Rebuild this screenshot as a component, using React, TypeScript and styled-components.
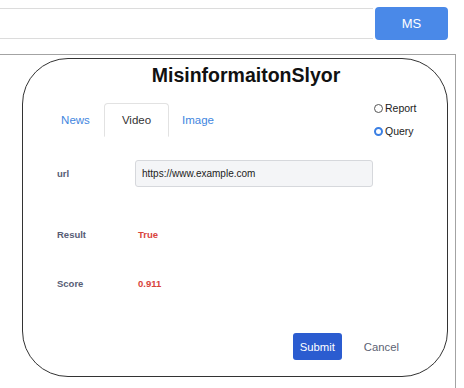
import React, { useState } from 'react';
import styled, { createGlobalStyle } from 'styled-components';

const GlobalStyle = createGlobalStyle`
  body {
    margin: 0;
    background: #fff;
    font-family: "Liberation Sans", Arial, Helvetica, sans-serif;
    overflow: hidden;
  }
`;

const Header = styled.div`
  display: flex;
  align-items: flex-start;
  padding-top: 7px;
`;

const SearchStrip = styled.div`
  box-sizing: border-box;
  width: 373px;
  height: 31px;
  margin-top: 1px;
  border-top: 1px solid #dcdcdc;
  border-bottom: 1px solid #dcdcdc;
`;

const MsButton = styled.button`
  width: 73px;
  height: 33px;
  margin-left: 2px;
  border: none;
  border-radius: 4px;
  background: #4a89e8;
  color: #fff;
  font-family: inherit;
  font-size: 13px;
  padding: 0;
`;

const Panel = styled.div`
  box-sizing: border-box;
  width: 456px;
  height: 334px;
  margin-top: 14px;
  padding: 3px 0 0 22px;
  border-top: 1px solid #a3a3a3;
  border-right: 1px solid #a3a3a3;
`;

const Card = styled.div`
  box-sizing: border-box;
  width: 426px;
  height: 319px;
  border: 1px solid #333;
  border-radius: 46px;
  padding-top: 4px;
`;

const Title = styled.h1`
  margin: 0 0 0 22px;
  font-size: 19.5px;
  line-height: 24px;
  font-weight: bold;
  text-align: center;
  color: #111;
`;

const TopRow = styled.div`
  display: flex;
  align-items: flex-start;
  margin-top: 14px;
  padding-left: 24px;
`;

const TabList = styled.div`
  display: flex;
  width: 180px;
  margin-top: 2px;
  border-bottom: 1px solid #e2e2e2;
`;

const Tab = styled.div<{ $active?: boolean; $width: number }>`
  box-sizing: border-box;
  width: ${({ $width }) => $width}px;
  height: 34px;
  margin-bottom: -1px;
  text-align: center;
  font-size: 11.5px;
  line-height: 32px;
  color: ${({ $active }) => ($active ? '#333' : '#3f86e0')};
  background: #fff;
  border: 1px solid ${({ $active }) => ($active ? '#e2e2e2' : 'transparent')};
  border-bottom-color: ${({ $active }) => ($active ? '#fff' : 'transparent')};
  border-radius: 4px 4px 0 0;
  cursor: pointer;
`;

const RadioGroup = styled.div`
  display: flex;
  flex-direction: column;
  gap: 9px;
  margin-left: 147px;
`;

const RadioRow = styled.label`
  display: flex;
  align-items: center;
  gap: 2px;
  height: 14px;
  font-size: 10.5px;
  color: #222;
`;

const RadioDot = styled.span<{ $checked?: boolean }>`
  box-sizing: border-box;
  width: 9px;
  height: 9px;
  border-radius: 50%;
  border: ${({ $checked }) => ($checked ? '2px solid #3b7fe3' : '1px solid #555')};
  background: #fff;
`;

const Form = styled.div`
  margin-top: 22px;
  padding-left: 34px;
`;

const Row = styled.div<{ $gap?: number; $height: number }>`
  display: flex;
  align-items: center;
  height: ${({ $height }) => $height}px;
  margin-top: ${({ $gap }) => $gap ?? 0}px;
`;

const Label = styled.span`
  width: 78px;
  font-size: 9.5px;
  font-weight: bold;
  color: #575d75;
`;

const Value = styled.span`
  margin-left: 3px;
  font-size: 9.5px;
  font-weight: bold;
  color: #d8443c;
`;

const UrlInput = styled.input`
  box-sizing: border-box;
  width: 238px;
  height: 27px;
  padding: 0 6px;
  border: 1px solid #d6d8dc;
  border-radius: 3px;
  background: #f4f5f7;
  font-family: inherit;
  font-size: 10px;
  color: #222;
  outline: none;
`;

const Footer = styled.div`
  display: flex;
  justify-content: flex-end;
  align-items: center;
  gap: 10px;
  margin-top: 43px;
  padding-right: 36px;
`;

const SubmitButton = styled.button`
  width: 49px;
  height: 27px;
  padding: 0;
  border: none;
  border-radius: 3px;
  background: #2b5cd0;
  color: #fff;
  font-family: inherit;
  font-size: 11.3px;
`;

const CancelButton = styled.button`
  height: 27px;
  padding: 0 12px;
  border: none;
  background: none;
  color: #5b6172;
  font-family: inherit;
  font-size: 11.3px;
`;

const tabs = [
  { name: 'News', width: 57 },
  { name: 'Video', width: 65 },
  { name: 'Image', width: 58 },
];

export default function App() {
  const [tab, setTab] = useState('Video');
  const [mode, setMode] = useState('Query');

  return (
    <>
      <GlobalStyle />
      <Header>
        <SearchStrip />
        <MsButton>MS</MsButton>
      </Header>
      <Panel>
        <Card>
          <Title>MisinformaitonSlyor</Title>
          <TopRow>
            <TabList>
              {tabs.map((t) => (
                <Tab
                  key={t.name}
                  $width={t.width}
                  $active={tab === t.name}
                  onClick={() => setTab(t.name)}
                >
                  {t.name}
                </Tab>
              ))}
            </TabList>
            <RadioGroup>
              {['Report', 'Query'].map((m) => (
                <RadioRow key={m} onClick={() => setMode(m)}>
                  <RadioDot $checked={mode === m} />
                  {m}
                </RadioRow>
              ))}
            </RadioGroup>
          </TopRow>
          <Form>
            <Row $height={27}>
              <Label>url</Label>
              <UrlInput defaultValue="https://www.example.com" />
            </Row>
            <Row $height={14} $gap={40}>
              <Label>Result</Label>
              <Value>True</Value>
            </Row>
            <Row $height={14} $gap={35}>
              <Label>Score</Label>
              <Value>0.911</Value>
            </Row>
          </Form>
          <Footer>
            <SubmitButton>Submit</SubmitButton>
            <CancelButton>Cancel</CancelButton>
          </Footer>
        </Card>
      </Panel>
    </>
  );
}
